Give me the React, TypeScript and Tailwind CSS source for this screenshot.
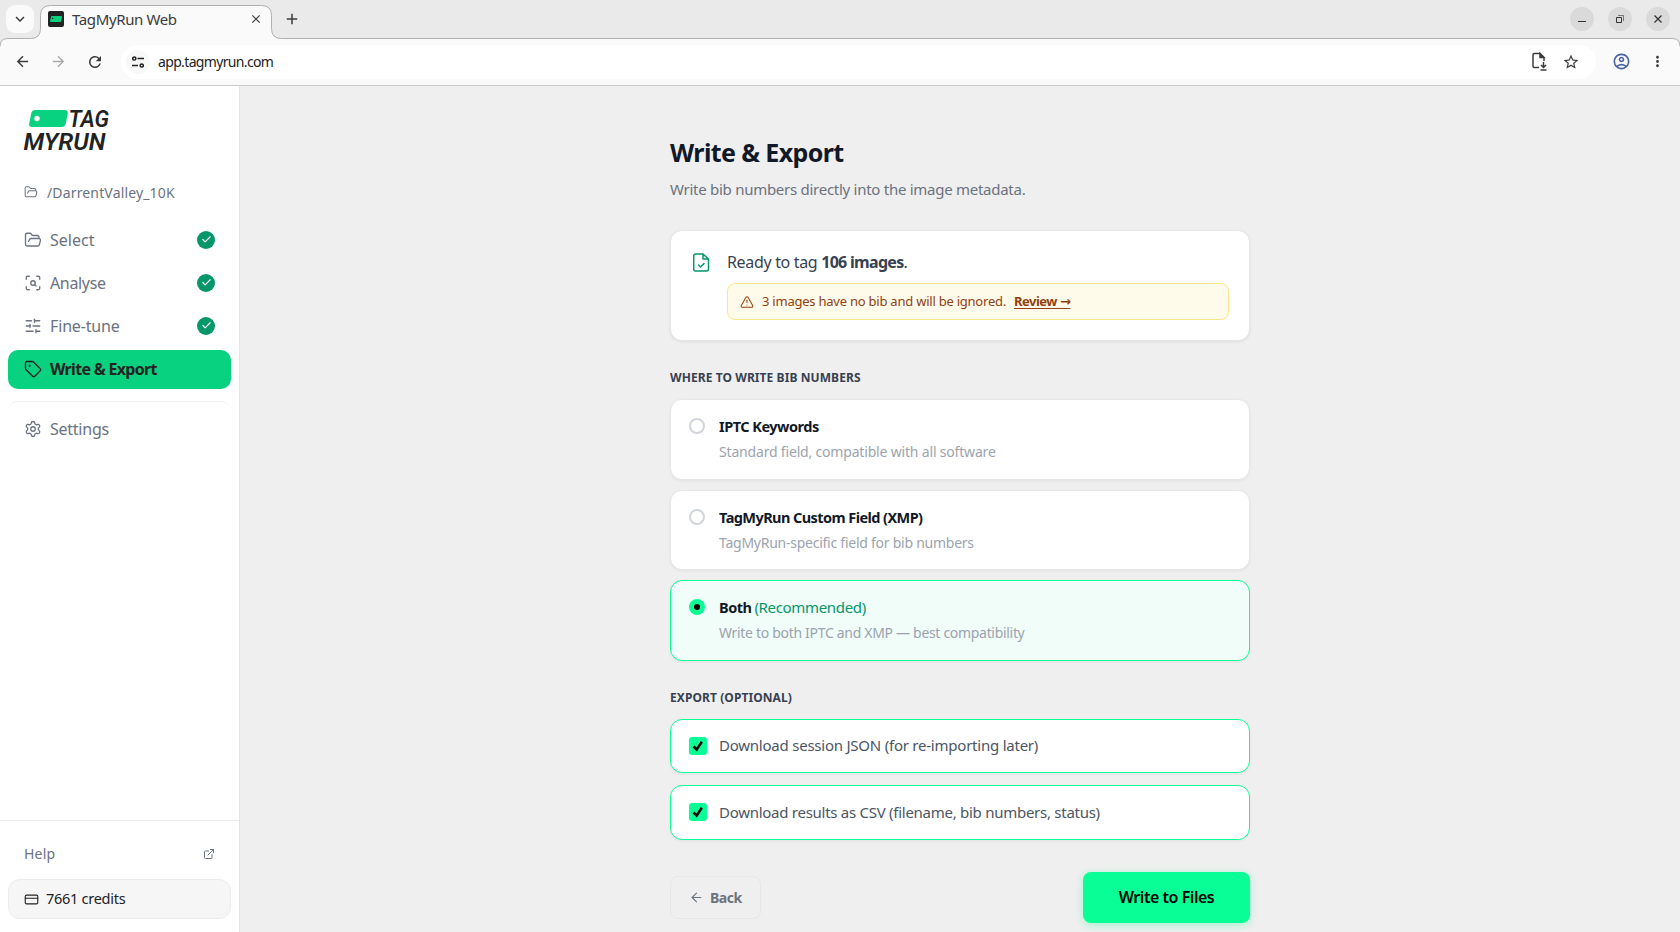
import { AlertTriangle, ArrowLeft, Check, CreditCard, ExternalLink, FolderOpen, ScanSearch, Settings, SlidersHorizontal, Tag } from "lucide-react";
import { MdArrowBack, MdArrowForward, MdRefresh, MdStarOutline, MdOutlineAccountCircle, MdMoreVert, MdClose, MdAdd, MdKeyboardArrowDown } from "react-icons/md";
import { useState } from "react";

interface WriteOption {
    id: string;
    title: string;
    titleClass: string;
    note?: string;
    description: string;
    descriptionClass: string;
}

const writeOptions: WriteOption[] = [
    { id: "iptc", title: "IPTC Keywords", titleClass: "tracking-[-0.5px]", description: "Standard field, compatible with all software", descriptionClass: "tracking-[-0.18px]" },
    { id: "xmp", title: "TagMyRun Custom Field (XMP)", titleClass: "tracking-[-0.57px]", description: "TagMyRun-specific field for bib numbers", descriptionClass: "tracking-[-0.25px]" },
    { id: "both", title: "Both", titleClass: "tracking-[-0.5px]", note: "(Recommended)", description: "Write to both IPTC and XMP — best compatibility", descriptionClass: "tracking-[-0.31px]" },
];

const steps = [
    { label: "Select", icon: FolderOpen, labelClass: "" },
    { label: "Analyse", icon: ScanSearch, labelClass: "tracking-[-0.35px]" },
    { label: "Fine-tune", icon: SlidersHorizontal, labelClass: "tracking-[-0.15px]" },
];

function BrowserBar() {
    return (
        <div className="h-[86px] shrink-0 bg-[#eaeaea] border-b border-[#cbcbcb] text-[#3c3c3c] relative">
            <div className="h-[38px] flex items-center">
                <div className="ml-1.5 w-7 h-7 rounded-[9px] bg-[#fafafa] flex items-center justify-center">
                    <MdKeyboardArrowDown size={18} />
                </div>
                <div className="ml-[14px] w-[215px] flex items-center">
                    <svg className="z-10" width="16" height="16" viewBox="0 0 16 16">
                        <rect width="16" height="16" rx="2" fill="#222" />
                        <path d="M3.5 5.500h10l-1 5H2.500z" fill="#08d17f" stroke="#08d17f" strokeLinejoin="round" />
                        <circle cx="4.600" cy="7.400" r=".7" fill="#222" />
                    </svg>
                    <span className="z-10 ml-2 text-[15px] tracking-[-0.37px] flex-1 whitespace-nowrap">TagMyRun Web</span>
                    <MdClose className="z-10" size={14} />
                </div>
                <MdAdd className="ml-[20px]" size={18} />
                <div className="ml-auto mr-2.5 flex gap-[14px]">
                    <span className="w-6 h-6 rounded-full bg-[#dadada] flex items-center justify-center">
                        <svg width="8" height="8" viewBox="0 0 8 8"><path d="M0 6.500h8" stroke="#333" /></svg>
                    </span>
                    <span className="w-6 h-6 rounded-full bg-[#dadada] flex items-center justify-center">
                        <svg width="8" height="8" viewBox="0 0 8 8" fill="none" stroke="#333"><path d="M.5 2.500h5v5h-5z" /><path d="M2 .5h5.500V6" strokeOpacity=".6" /></svg>
                    </span>
                    <span className="w-6 h-6 rounded-full bg-[#dadada] flex items-center justify-center">
                        <svg width="8" height="8" viewBox="0 0 8 8"><path d="M.5.5l7 7m0-7l-7 7" stroke="#333" strokeWidth="1.300" /></svg>
                    </span>
                </div>
            </div>
            {/* tab outline running into the toolbar */}
            <svg className="absolute left-0 top-0" width="1680" height="85" viewBox="0 0 1680 85" fill="none">
                <path d="M0 85V46.500Q0 38.500 8 38.500H30.500Q40.500 38.500 40.500 28.500V15.500Q40.500 5.500 50.500 5.500H261.500Q271.500 5.500 271.500 15.500V28.500Q271.500 38.500 281.500 38.500H1672Q1680 38.500 1680 46.500V85z" fill="#fafafa" />
                <path d="M0 46.500Q0 38.500 8 38.500H30.500Q40.500 38.500 40.500 28.500V15.500Q40.500 5.500 50.500 5.500H261.500Q271.500 5.500 271.500 15.500V28.500Q271.500 38.500 281.500 38.500H1672Q1680 38.500 1680 46.500" stroke="#b0b0b0" />
            </svg>
            <div className="relative h-[47px] flex items-center pl-[14px] pr-[14px]">
                <MdArrowBack size={17} />
                <MdArrowForward className="ml-[19px] text-[#aaa]" size={17} />
                <MdRefresh className="ml-[19px]" size={18} />
                <div className="ml-[17px] w-[1475px] h-[34px] rounded-full bg-white flex items-center pl-[5px] pr-4">
                    <span className="w-6 h-6 rounded-full bg-[#f8f8f8] flex items-center justify-center">
                        <svg width="12" height="12" viewBox="0 0 12 12" fill="none" stroke="#222" strokeWidth="1.500">
                            <circle cx="2.300" cy="2.500" r="1.600" /><path d="M5.500 2.500H12M0 9.500h6" /><circle cx="9.700" cy="9.500" r="1.600" />
                        </svg>
                    </span>
                    <span className="ml-2 flex-1 text-[14px] tracking-[-0.65px] text-[#222]">app.tagmyrun.com</span>
                    <svg width="16" height="19" viewBox="0 0 16 19" fill="none" stroke="#3c3c3c" strokeWidth="1.500">
                        <path d="M7 15.500H2.300Q1 15.500 1 14.200V3Q1 1.500 2.300 1.500H8L12 5.500V9" /><path d="M8 1.500V5.500H12z" fill="#3c3c3c" /><path d="M11.500 10v5M9 13l2.500 2.500L14 13M8.500 18h6" />
                    </svg>
                    <MdStarOutline className="ml-[14px]" size={18} />
                </div>
                <MdOutlineAccountCircle className="ml-[16px] text-[#4a63a5]" size={19} />
                <MdMoreVert className="ml-auto" size={17} />
            </div>
        </div>
    );
}

function Logo() {
    return (
        <svg className="ml-3 mt-[18px] shrink-0" width="94" height="56" viewBox="20 104 94 56">
            <path d="M35 110H64.500Q68.500 110 67.800 113.500L65.800 123.500Q65 127 61.500 127H32Q28.500 127 29.200 123.500L31.200 113.500Q32 110 35 110z" fill="#08d17f" />
            <circle cx="37" cy="118.500" r="2.700" fill="#fff" />
            <g fill="#222" fontFamily="Roboto, sans-serif" fontStyle="italic" fontWeight="600" fontSize="24.500">
                <text x="68.500" y="127" textLength="40.500" lengthAdjust="spacingAndGlyphs">TAG</text>
                <text x="23.500" y="149.700" textLength="82" lengthAdjust="spacingAndGlyphs">MYRUN</text>
            </g>
        </svg>
    );
}

function Sidebar() {
    return (
        <div className="w-60 shrink-0 bg-white border-r border-[#e3e4e6] flex flex-col px-2 text-[#6b7280]">
            <Logo />
            <div className="mt-[22px] h-5 pl-4 flex items-center">
                <FolderOpen size={14} strokeWidth={1.75} />
                <span className="ml-[9px] text-[14px] tracking-[0.15px]">/DarrentValley_10K</span>
            </div>
            <div className="mt-[18px] flex flex-col gap-1">
                {steps.map((step) => (
                    <div key={step.label} className="h-[39px] pl-4 pr-4 flex items-center">
                        <step.icon size={18} strokeWidth={1.75} />
                        <span className={"ml-2 text-[16px] flex-1 " + step.labelClass}>{step.label}</span>
                        <span className="w-[18px] h-[18px] rounded-full bg-[#059669] flex items-center justify-center">
                            <Check size={11} strokeWidth={2.5} className="text-white" />
                        </span>
                    </div>
                ))}
                <div className="mt-px h-[39px] pl-4 pb-px rounded-[10px] bg-[#08d17f] text-[#222] flex items-center">
                    <Tag size={18} strokeWidth={1.75} />
                    <span className="ml-2 text-[16px] font-bold tracking-[-0.7px]">Write &amp; Export</span>
                </div>
            </div>
            <div className="mt-3 h-[55px] pl-4 rounded-[10px] border-t border-[#eeeff0] flex items-center">
                <Settings size={18} strokeWidth={1.75} />
                <span className="ml-2 text-[16px] tracking-[-0.25px]">Settings</span>
            </div>
            <div className="mt-auto -mx-2 border-t border-[#ebebeb] px-2 pt-[13px] pb-[13px]">
                <div className="h-[39px] px-4 flex items-center justify-between text-[14px] tracking-[0.2px]">
                    <span>Help</span>
                    <ExternalLink size={12} strokeWidth={2} />
                </div>
                <div className="mt-[6px] h-10 pl-[15px] rounded-[12px] border border-[#ebebeb] bg-[#f6f6f6] text-[#222] flex items-center">
                    <CreditCard size={15} strokeWidth={1.75} />
                    <span className="ml-[7px] text-[14.500px] tracking-[-0.27px]">7661 credits</span>
                </div>
            </div>
        </div>
    );
}

function ExportRow({ label, labelClass }: { label: string; labelClass: string }) {
    return (
        <div className="h-[54.500px] px-[18px] rounded-[12px] border border-[#09ff95] bg-white flex items-center shadow-[0_1px_3px_rgba(0,0,0,0.06)]">
            <span className="w-[18px] h-[18px] rounded-[3px] bg-[#09ff95] flex items-center justify-center">
                <svg width="12" height="12" viewBox="0 0 12 12"><path d="M1.500 6.500L4.700 9.500L9.800 1.800" fill="none" stroke="#000" strokeWidth="2.500" /></svg>
            </span>
            <span className={"ml-3 -mt-px text-[15px] text-[#4b5563] " + labelClass}>{label}</span>
        </div>
    );
}

export default function App() {
    const [selected, setSelected] = useState("both");

    return (
        <div className="h-screen overflow-hidden flex flex-col font-['Noto_Sans',sans-serif] bg-[#efefef]">
            <BrowserBar />
            <div className="flex-1 flex min-h-0">
                <Sidebar />
                <div className="flex-1 flex justify-center">
                    <div className="w-[580px] pt-[50px]">
                        <h1 className="h-8 leading-8 text-[25px] tracking-[-0.6px] font-bold text-[#111827]">Write &amp; Export</h1>
                        <p className="mt-[10px] h-[22px] leading-[22px] text-[15px] tracking-[-0.27px] text-[#6b7280]">Write bib numbers directly into the image metadata.</p>

                        <div className="mt-[30px] h-[111px] rounded-[12px] border border-[#e5e7eb] bg-white pl-[22px] pr-5 pt-[19px] flex shadow-[0_1px_3px_rgba(0,0,0,0.08)]">
                            <svg className="mt-[3px]" width="17" height="19" viewBox="0.5 0 17 19" fill="none" stroke="#059669" strokeWidth="1.500" strokeLinecap="round" strokeLinejoin="round">
                                <path d="M10.500 1H3Q1.200 1 1.200 3V16Q1.200 18 3 18H14Q16 18 16 16V6L10.500 1V6H16M6 12l2 2 3.500-3.500" />
                            </svg>
                            <div className="ml-[17px] flex-1">
                                <div className="h-6 leading-6 text-[16px] tracking-[-0.33px] text-[#374151]">Ready to tag <b className="tracking-[-0.7px]">106 images</b>.</div>
                                <div className="mt-[9px] h-[37px] rounded-lg border border-[#fde68a] bg-[#fffbeb] px-3 flex items-center text-[13px] text-[#92400e]">
                                    <AlertTriangle size={14} strokeWidth={1.75} />
                                    <span className="ml-2 tracking-[-0.23px]">3 images have no bib and will be ignored.</span>
                                    <span className="ml-2 font-bold tracking-[-0.5px] underline underline-offset-2">Review <span className="font-['DejaVu_Sans'] text-[13px]">→</span></span>
                                </div>
                            </div>
                        </div>

                        <div className="mt-[27px] h-5 leading-5 text-[12px] tracking-[0.08px] font-bold text-[#374151]">WHERE TO WRITE BIB NUMBERS</div>
                        <div className="mt-[11px] flex flex-col gap-[10px]">
                            {writeOptions.map((option) => (
                                <div
                                    key={option.id}
                                    onClick={() => setSelected(option.id)}
                                    className={"h-[80.500px] rounded-[12px] border pl-[18px] pt-[16px] flex shadow-[0_1px_3px_rgba(0,0,0,0.06)] " + (selected === option.id ? "border-[#09ff95] bg-[#f0fdf9]" : "border-[#e5e7eb] bg-white")}
                                >
                                    {selected === option.id ? (
                                        <span className="mt-[2px] w-4 h-4 rounded-full bg-[#09ff95] flex items-center justify-center"><span className="w-1.5 h-1.5 rounded-full bg-black" /></span>
                                    ) : (
                                        <span className="mt-[2px] w-4 h-4 rounded-full border-2 border-[#d1d5db] bg-white" />
                                    )}
                                    <div className="ml-[14px] -mt-px">
                                        <div className="h-[22px] leading-[22px] text-[15px] text-[#111827]">
                                            <span className={"font-bold text-[14.500px] " + option.titleClass}>{option.title}</span>
                                            {option.note && <span className="ml-[3px] tracking-[-0.33px] text-[#059669]">{option.note}</span>}
                                        </div>
                                        <div className={"mt-1 h-[22px] leading-[22px] text-[14px] text-[#9ca3af] " + option.descriptionClass}>{option.description}</div>
                                    </div>
                                </div>
                            ))}
                        </div>

                        <div className="mt-[27px] h-5 leading-5 text-[12px] tracking-[0.08px] font-bold text-[#374151]">EXPORT (OPTIONAL)</div>
                        <div className="mt-[11px] flex flex-col gap-3">
                            <ExportRow label="Download session JSON (for re-importing later)" labelClass="tracking-[-0.23px]" />
                            <ExportRow label="Download results as CSV (filename, bib numbers, status)" labelClass="tracking-[-0.27px]" />
                        </div>

                        <div className="mt-8 flex items-center justify-between">
                            <button className="w-[91px] h-[43px] rounded-lg border border-[#e5e7eb] flex items-center pl-[18px] text-[14px] font-bold tracking-[-0.5px] text-[#6b7280]">
                                <ArrowLeft size={15} strokeWidth={1.75} />
                                <span className="ml-[6px]">Back</span>
                            </button>
                            <button className="w-[167px] h-[51px] rounded-lg bg-[#09ff95] text-[16px] font-semibold tracking-[-0.46px] text-black shadow-[0_2px_8px_rgba(9,255,149,0.35)]">Write to Files</button>
                        </div>
                    </div>
                </div>
            </div>
        </div>
    );
}
